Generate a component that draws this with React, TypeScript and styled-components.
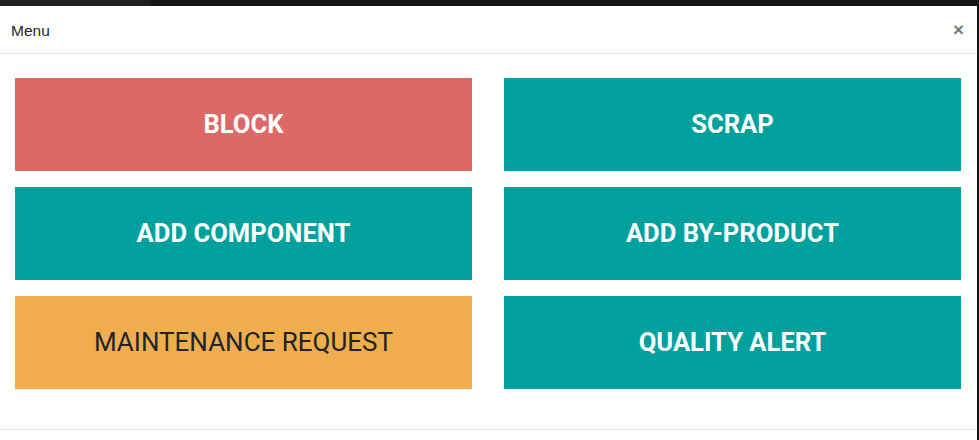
import styled, { createGlobalStyle } from 'styled-components'

const GlobalStyle = createGlobalStyle`
  html, body {
    margin: 0;
    padding: 0;
    background: #161616;
    font-family: Roboto, "Liberation Sans", Arial, sans-serif;
  }
`

const Backdrop = styled.div`
  width: 979px;
  height: 440px;
  overflow: hidden;
  display: flex;
  flex-direction: column;
`

const TopStrip = styled.div`
  height: 6px;
  display: flex;
  flex-shrink: 0;
`

const StripSegment = styled.div<{ $w?: number; $bg: string }>`
  width: ${(p) => (p.$w ? `${p.$w}px` : 'auto')};
  flex: ${(p) => (p.$w ? '0 0 auto' : '1')};
  background: ${(p) => p.$bg};
`

const Modal = styled.div`
  width: 977px;
  background: #fff;
  flex: 1;
  display: flex;
  flex-direction: column;
`

const Header = styled.div`
  height: 47px;
  padding: 0 11px;
  display: flex;
  align-items: center;
  justify-content: space-between;
  border-bottom: 1px solid #dee2e6;
`

const Title = styled.h4`
  margin: 0;
  font-family: "Liberation Sans", Arial, sans-serif;
  font-size: 15.5px;
  font-weight: 400;
  color: #212529;
  padding-top: 2px;
`

const Close = styled.button`
  border: 0;
  background: transparent;
  padding: 0;
  margin-right: 2px;
  font-family: "Liberation Sans", Arial, sans-serif;
  font-size: 19px;
  font-weight: 700;
  line-height: 1;
  color: #7a7a7a;
  cursor: pointer;
`

const Body = styled.div`
  padding: 24px 16px 40px 15px;
  display: grid;
  grid-template-columns: 457px 457px;
  grid-auto-rows: 93px;
  column-gap: 32px;
  row-gap: 16px;
`

const variants = {
  danger: { bg: '#dc6965', fg: '#ffffff', weight: 700, size: 25.6 },
  primary: { bg: '#00a09d', fg: '#ffffff', weight: 700, size: 25.6 },
  warning: { bg: '#f0ad4e', fg: '#212529', weight: 400, size: 26 },
}

type Variant = keyof typeof variants

const ActionButton = styled.button<{ $variant: Variant }>`
  border: 0;
  margin: 0;
  padding: 0 0 2px;
  display: flex;
  align-items: center;
  justify-content: center;
  background: ${(p) => variants[p.$variant].bg};
  color: ${(p) => variants[p.$variant].fg};
  font-family: Roboto, "Liberation Sans", Arial, sans-serif;
  font-size: ${(p) => variants[p.$variant].size}px;
  font-weight: ${(p) => variants[p.$variant].weight};
  text-transform: uppercase;
  cursor: pointer;
`

const Footer = styled.div`
  border-top: 1px solid #dee2e6;
  flex: 1;
`

const actions: { label: string; variant: Variant }[] = [
  { label: 'Block', variant: 'danger' },
  { label: 'Scrap', variant: 'primary' },
  { label: 'Add Component', variant: 'primary' },
  { label: 'Add By-Product', variant: 'primary' },
  { label: 'Maintenance Request', variant: 'warning' },
  { label: 'Quality Alert', variant: 'primary' },
]

export default function App() {
  return (
    <>
      <GlobalStyle />
      <Backdrop>
        <TopStrip>
          <StripSegment $w={150} $bg="#1f1f1f" />
          <StripSegment $bg="#171717" />
        </TopStrip>
        <Modal>
          <Header>
            <Title>Menu</Title>
            <Close type="button" aria-label="Close">×</Close>
          </Header>
          <Body>
            {actions.map((a) => (
              <ActionButton key={a.label} type="button" $variant={a.variant}>
                {a.label}
              </ActionButton>
            ))}
          </Body>
          <Footer />
        </Modal>
      </Backdrop>
    </>
  )
}
